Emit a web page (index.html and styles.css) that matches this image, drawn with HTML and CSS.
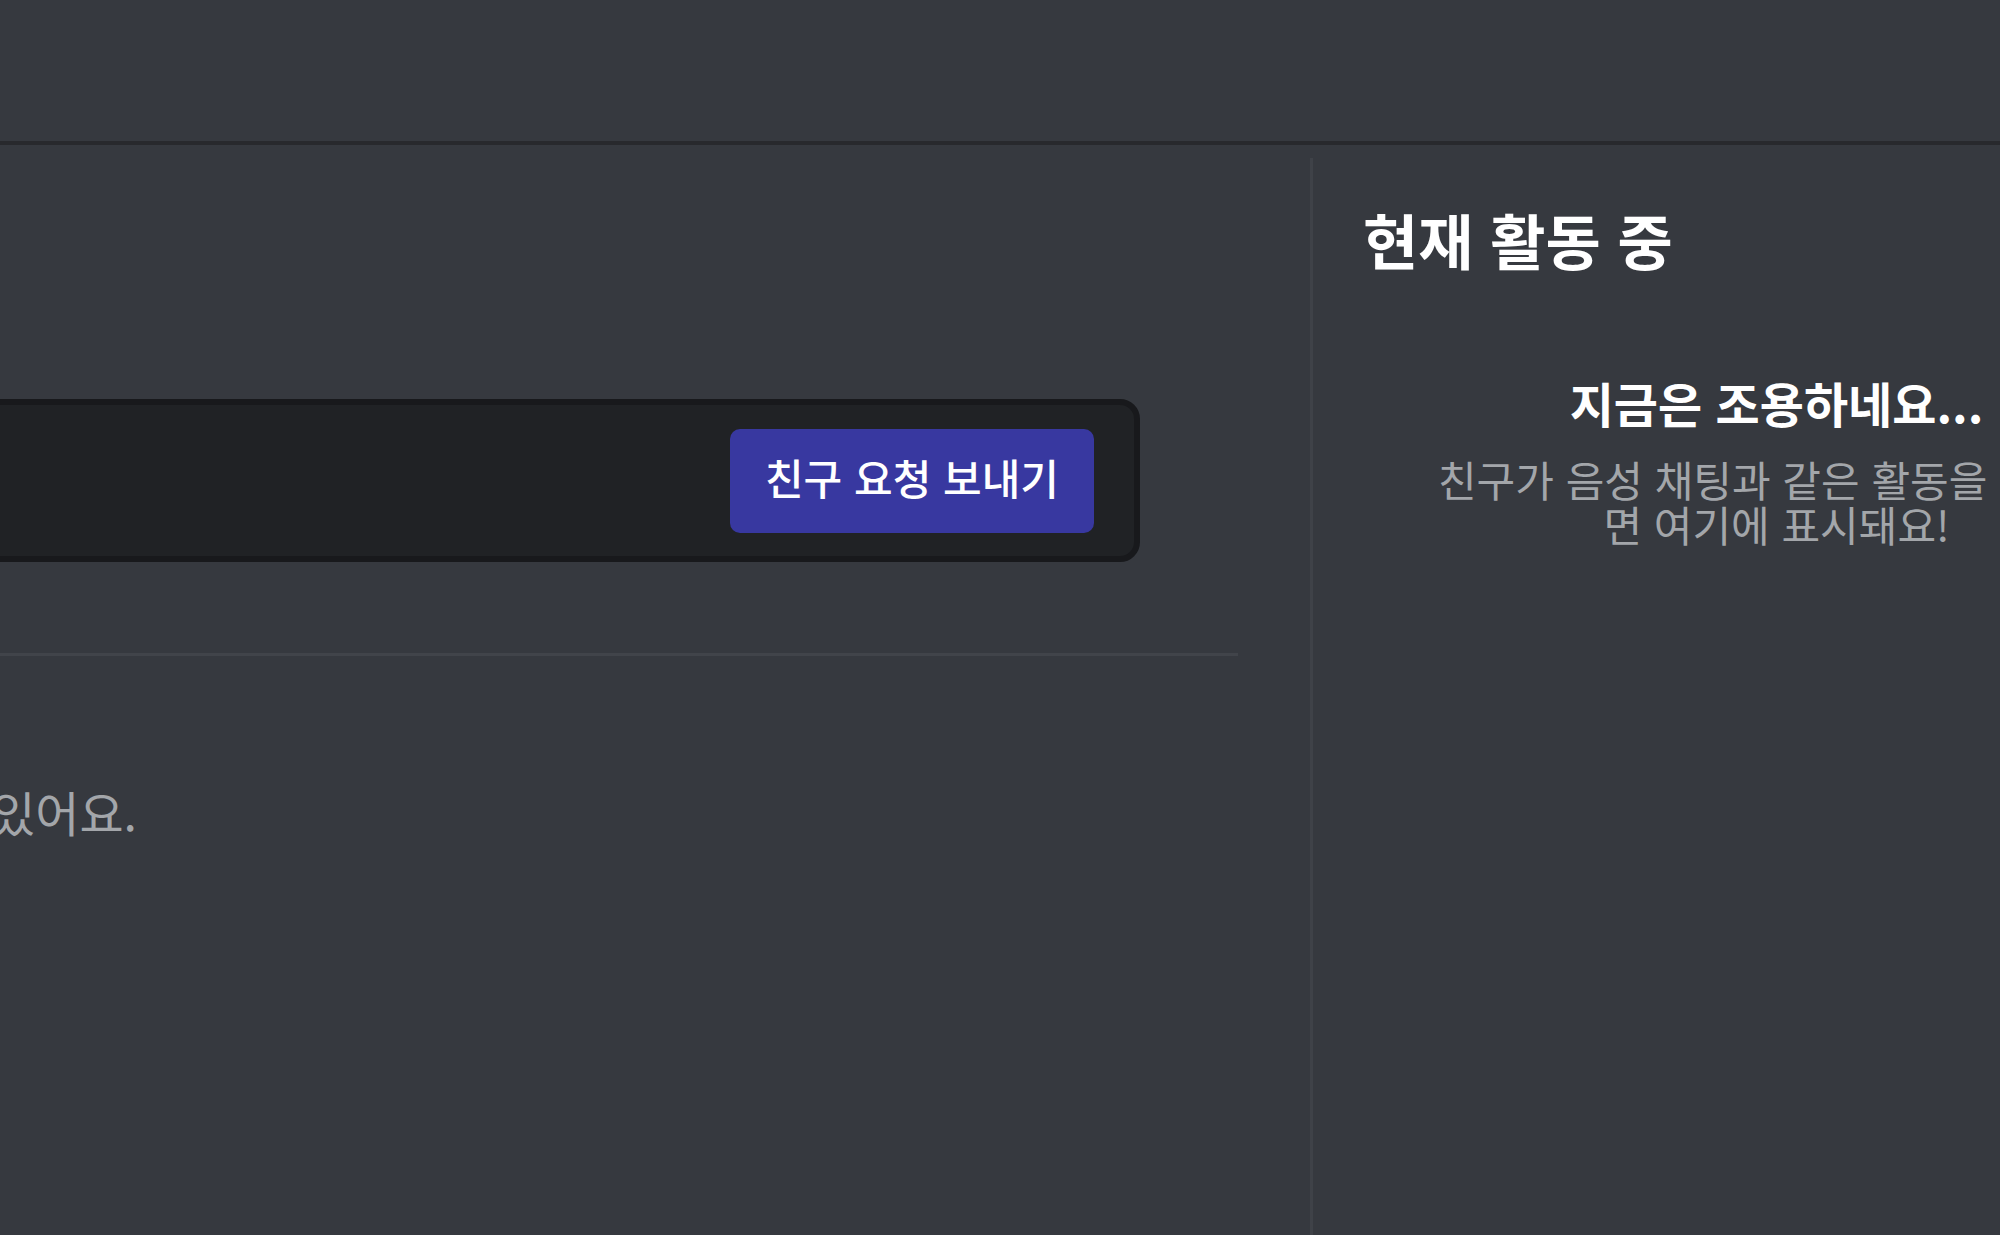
FILE: index.html
```html
<!DOCTYPE html>
<html lang="ko">
<head>
<meta charset="utf-8">
<title>친구</title>
<link rel="stylesheet" href="styles.css">
</head>
<body>
<div class="app">
  <header class="topbar"></header>
  <div class="content">
    <main class="main">
      <form class="add-form">
        <button type="button" class="send-btn">친구 요청 보내기</button>
      </form>
      <div class="divider"></div>
      <div class="empty-line">
        <p class="empty-text">Wumpus는 친구를 기다리고 있어요.</p>
      </div>
    </main>
    <aside class="active-now">
      <h2 class="active-title">현재 활동 중</h2>
      <div class="active-empty">
        <h3 class="active-empty-title">지금은 조용하네요...</h3>
        <p class="active-empty-desc">친구가 음성 채팅과 같은 활동을 시작하면 여기에 표시돼요!</p>
      </div>
    </aside>
  </div>
</div>
</body>
</html>
```
FILE: styles.css
```css
html, body {
  margin: 0;
  padding: 0;
  background: #36393f;
  overflow: hidden;
  width: 2000px;
  height: 1235px;
}

body {
  font-family: "Noto Sans CJK KR", "Noto Sans", sans-serif;
  color: #ffffff;
}

.app {
  display: flex;
  flex-direction: column;
  height: 1235px;
}

.topbar {
  flex: 0 0 auto;
  height: 141px;
  border-bottom: 4px solid #28292d;
  background: #36393f;
}

.content {
  display: flex;
  flex: 1 1 auto;
  width: 3439px;
  margin-left: -1200px;
}

.main {
  flex: 0 0 2510px;
  box-sizing: border-box;
  padding: 254px 72px 0 0;
  display: flex;
  flex-direction: column;
}

.add-form {
  box-sizing: border-box;
  height: 163px;
  margin: 0 98px 0 0;
  background: #202225;
  border: 6px solid #18191c;
  border-radius: 20px;
  display: flex;
  align-items: center;
  justify-content: flex-end;
  padding: 0 40px 0 0;
}

.send-btn {
  box-sizing: border-box;
  width: 364px;
  height: 104px;
  margin-top: 1px;
  border: 0;
  border-radius: 10px;
  background: #3838a0;
  color: #ffffff;
  font-family: "Noto Sans CJK KR", "Noto Sans", sans-serif;
  font-size: 42px;
  font-weight: 500;
  line-height: 54px;
  padding: 0 0 8px 0;
  display: flex;
  align-items: center;
  justify-content: center;
}

.divider {
  height: 3px;
  margin-top: 91px;
  background: #41444a;
}

.empty-line {
  margin-top: 125px;
  width: 1337px;
  text-align: right;
}

.empty-text {
  margin: 0;
  font-size: 48px;
  line-height: 60px;
  color: #a3a6aa;
  white-space: nowrap;
}

.active-now {
  flex: 0 0 930px;
  box-sizing: border-box;
  margin-top: 13px;
  border-left: 3px solid #3f4248;
  padding: 45px 50px 0 50px;
}

.active-title {
  margin: 0;
  font-size: 60px;
  line-height: 72px;
  font-weight: 700;
  color: #ffffff;
}

.active-empty {
  margin: 97px auto 0;
  width: 690px;
  text-align: center;
}

.active-empty-title {
  margin: 0;
  font-size: 48px;
  line-height: 60px;
  font-weight: 700;
  color: #ffffff;
}

.active-empty-desc {
  margin: 24px 0 0;
  font-size: 42px;
  line-height: 45px;
  color: #a3a6aa;
}
```
